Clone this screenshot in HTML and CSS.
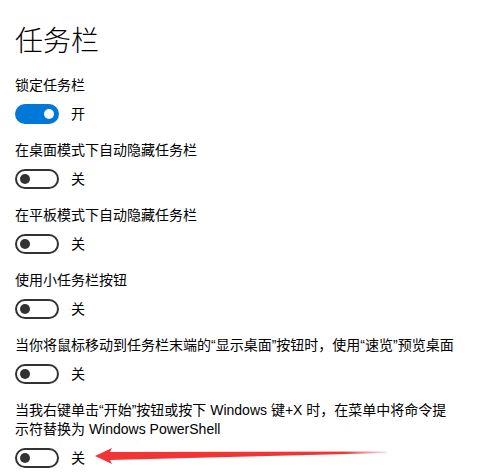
FILE: index.html
```html
<!DOCTYPE html>
<html lang="zh-CN">

<head>
    <meta charset="UTF-8">
    <meta name="viewport" content="width=device-width, initial-scale=1.0">
    <title>任务栏</title>
    <link rel="stylesheet" href="styles.css">
</head>

<body>
    <div class="page">
        <h1 class="title">任务栏</h1>

        <div class="item">
            <p class="label">锁定任务栏</p>
            <div class="switch on">
                <span class="track"><span class="knob"></span></span>
                <span class="state">开</span>
            </div>
        </div>

        <div class="item">
            <p class="label">在桌面模式下自动隐藏任务栏</p>
            <div class="switch">
                <span class="track"><span class="knob"></span></span>
                <span class="state">关</span>
            </div>
        </div>

        <div class="item">
            <p class="label">在平板模式下自动隐藏任务栏</p>
            <div class="switch">
                <span class="track"><span class="knob"></span></span>
                <span class="state">关</span>
            </div>
        </div>

        <div class="item">
            <p class="label">使用小任务栏按钮</p>
            <div class="switch">
                <span class="track"><span class="knob"></span></span>
                <span class="state">关</span>
            </div>
        </div>

        <div class="item">
            <p class="label">当你将鼠标移动到任务栏末端的“显示桌面”按钮时，使用“速览”预览桌面</p>
            <div class="switch">
                <span class="track"><span class="knob"></span></span>
                <span class="state">关</span>
            </div>
        </div>

        <div class="item">
            <p class="label">当我右键单击“开始”按钮或按下 Windows 键+X 时，在菜单中将命令提示符替换为 Windows PowerShell</p>
            <div class="switch">
                <span class="track"><span class="knob"></span></span>
                <span class="state">关</span>
            </div>
        </div>
    </div>

    <!--标注箭头-->
    <svg class="arrow" width="493" height="475" viewBox="0 0 493 475">
        <defs>
            <linearGradient id="fade" x1="95" y1="0" x2="387" y2="0" gradientUnits="userSpaceOnUse">
                <stop offset="0" stop-color="#f23434" />
                <stop offset="0.85" stop-color="#f23434" />
                <stop offset="1" stop-color="#f23434" stop-opacity="0.15" />
            </linearGradient>
        </defs>
        <polygon fill="url(#fade)"
            points="95,456 112,448 110,452 387,451.5 387,453 110,460 112,464" />
    </svg>
</body>

</html>
```

FILE: styles.css
```css
* {
    margin: 0;
    padding: 0
}

body {
    position: relative;
    background-color: #fff;
    color: #000;
    font-family: "Liberation Sans", "Noto Sans CJK SC", sans-serif;
    font-size: 14px;
}

.page {
    padding: 19px 15px 0;
}

.title {
    font-family: "Noto Sans CJK SC", sans-serif;
    font-size: 28px;
    font-weight: 300;
    line-height: 40px;
    margin-bottom: 17px;
}

.item {
    margin-bottom: 17px;
}

.label {
    max-width: 440px;
    line-height: 19px;
    margin-bottom: 9px;
}

.switch {
    display: flex;
    align-items: center;
    gap: 12px;
}

.track {
    box-sizing: border-box;
    width: 44px;
    height: 20px;
    border: 2px solid #333;
    border-radius: 10px;
    display: flex;
    align-items: center;
    padding: 0 3px;
}

.knob {
    width: 10px;
    height: 10px;
    border-radius: 50%;
    background-color: #333;
}

.switch.on .track {
    border-color: #0078d7;
    background-color: #0078d7;
    justify-content: flex-end;
}

.switch.on .knob {
    background-color: #fff;
}

.state {
    line-height: 20px;
}

.arrow {
    position: absolute;
    top: 0;
    left: 0;
}
```
